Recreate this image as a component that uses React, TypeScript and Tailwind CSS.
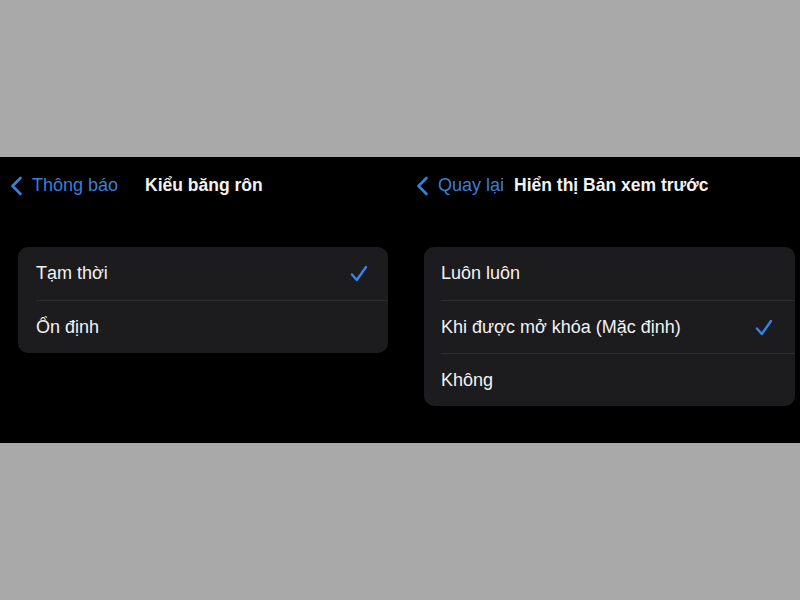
type Option = { label: string; checked?: boolean }

function Check() {
  return (
    <svg width="18" height="17" viewBox="0 0 18 17" fill="none">
      <path d="M2 9.5 L6.8 15 L16 2" stroke="#3b82e6" strokeWidth="2.4" strokeLinecap="round" strokeLinejoin="round" />
    </svg>
  )
}

function Back() {
  return (
    <svg width="13" height="20" viewBox="0 0 13 20" fill="none">
      <path d="M10.5 2 L2.5 10 L10.5 18" stroke="#3b7fd8" strokeWidth="2.6" strokeLinecap="round" strokeLinejoin="round" />
    </svg>
  )
}

function Row({ option, first, padL, padR }: { option: Option; first: boolean; padL: string; padR: string }) {
  return (
    <div className={`h-[53px] flex ${padL}`}>
      <div className={`flex-1 flex items-center justify-between ${padR} ${first ? "" : "border-t border-[#2f2f31]"}`}>
        <span className="text-[18px] text-[#f2f2f2]">{option.label}</span>
        {option.checked && <Check />}
      </div>
    </div>
  )
}

function Panel({
  back,
  title,
  options,
  head,
  backGap,
  titleGap,
  card,
  padL,
  padR,
}: {
  back: string
  title: string
  options: Option[]
  head: string
  backGap: string
  titleGap: string
  card: string
  padL: string
  padR: string
}) {
  return (
    <div className="w-[400px] flex flex-col">
      <div className={`h-[57px] flex items-center ${head}`}>
        <Back />
        <span className={`text-[18px] text-[#3b7fd8] ${backGap}`}>{back}</span>
        <span className={`text-[17.5px] font-bold text-[#f2f2f2] ${titleGap}`}>{title}</span>
      </div>
      <div className={`mt-[33px] rounded-[10px] bg-[#1c1c1e] ${card}`}>
        {options.map((o, i) => (
          <Row key={o.label} option={o} first={i === 0} padL={padL} padR={padR} />
        ))}
      </div>
    </div>
  )
}

export default function App() {
  return (
    <div className="w-[800px] h-[600px] bg-[#a9a9a9] flex flex-col" style={{ fontFamily: '"Liberation Sans", Arial, sans-serif' }}>
      <div className="h-[157px]" />
      <div className="h-[286px] bg-black flex">
        <Panel
          back="Thông báo"
          title="Kiểu băng rôn"
          head="pl-[10px]"
          backGap="ml-[9px]"
          titleGap="ml-[27px]"
          card="ml-[18px] w-[370px]"
          padL="pl-[18px]"
          padR="pr-[20px]"
          options={[{ label: "Tạm thời", checked: true }, { label: "Ổn định" }]}
        />
        <Panel
          back="Quay lại"
          title="Hiển thị Bản xem trước"
          head="pl-[16px]"
          backGap="ml-[9px]"
          titleGap="ml-[10px]"
          card="ml-[24px] w-[371px]"
          padL="pl-[17px]"
          padR="pr-[22px]"
          options={[
            { label: "Luôn luôn" },
            { label: "Khi được mở khóa (Mặc định)", checked: true },
            { label: "Không" },
          ]}
        />
      </div>
    </div>
  )
}
